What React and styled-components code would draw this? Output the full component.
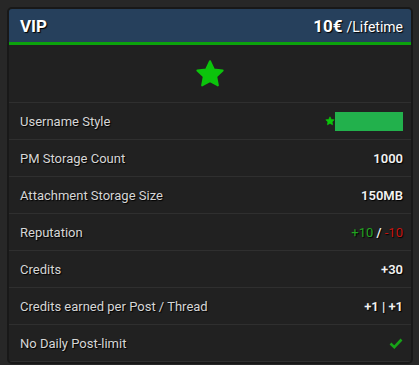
import React from "react";
import styled, { createGlobalStyle } from "styled-components";

const GlobalStyle = createGlobalStyle`
  html, body {
    margin: 0;
    padding: 0;
    background: #272727;
    font-family: Roboto, "Liberation Sans", sans-serif;
  }
`;

const Page = styled.div`
  padding: 7px;
`;

const Card = styled.div`
  width: 402px;
  border: 2px solid #181818;
  border-radius: 5px;
  background: #212121;
  overflow: hidden;
`;

const Header = styled.div`
  display: flex;
  align-items: center;
  justify-content: space-between;
  height: 33px;
  padding: 0 8px 0 11px;
  background: #26405c;
  border-bottom: 3px solid #0ca20c;
  color: #fff;
  text-shadow: 1px 1px 1px #000;
`;

const Title = styled.span`
  font-size: 17px;
  font-weight: 700;
`;

const Price = styled.span`
  font-size: 17px;
  font-weight: 700;

  small {
    font-size: 14px;
    font-weight: 400;
    margin-left: 4px;
  }
`;

const StarArea = styled.div`
  display: flex;
  align-items: center;
  justify-content: center;
  height: 57px;
  border-bottom: 1px solid #2f2f2f;
`;

const Row = styled.div`
  display: flex;
  align-items: center;
  justify-content: space-between;
  height: 36px;
  padding: 0 8px 0 11px;
  border-bottom: 1px solid #2f2f2f;
  font-size: 13px;
  text-shadow: 1px 1px 1px #000;
`;

const Label = styled.span`
  color: #d6d6d6;
`;

const Value = styled.span`
  display: flex;
  align-items: center;
  color: #f2f2f2;
  font-weight: 600;
`;

const Rep = styled.span`
  font-weight: 400;
  color: ${(p) => p.$color};
`;

const NameBox = styled.span`
  display: inline-block;
  width: 68px;
  height: 19px;
  background: #22b14c;
`;

const Star = ({ size }) => (
  <svg width={size} height={size} viewBox="0 0 24 24">
    <path
      d="M12 1.8l3.1 6.5 7 .9-5.1 4.9 1.3 7-6.3-3.4-6.3 3.4 1.3-7L1.9 9.2l7-.9z"
      fill="#0cc40c"
      stroke="#0cc40c"
      strokeWidth="1.6"
      strokeLinejoin="round"
    />
  </svg>
);

const Check = () => (
  <svg width="14" height="11" viewBox="0 0 14 11">
    <path d="M1.5 5.5l3.8 3.6L12.5 1.5" fill="none" stroke="#17a317" strokeWidth="2.6" />
  </svg>
);

const rows = [
  {
    label: "Username Style",
    value: (
      <>
        <Star size={10} />
        <NameBox />
      </>
    ),
  },
  { label: "PM Storage Count", value: "1000" },
  { label: "Attachment Storage Size", value: "150MB" },
  {
    label: "Reputation",
    value: (
      <>
        <Rep $color="#22a322">+10</Rep>&nbsp;/&nbsp;<Rep $color="#c8140f">-10</Rep>
      </>
    ),
  },
  { label: "Credits", value: "+30" },
  { label: "Credits earned per Post / Thread", value: "+1 | +1" },
  { label: "No Daily Post-limit", value: <Check /> },
];

export default function App() {
  return (
    <Page>
      <GlobalStyle />
      <Card>
        <Header>
          <Title>VIP</Title>
          <Price>
            10€<small>/Lifetime</small>
          </Price>
        </Header>
        <StarArea>
          <Star size={30} />
        </StarArea>
        {rows.map((r) => (
          <Row key={r.label}>
            <Label>{r.label}</Label>
            <Value>{r.value}</Value>
          </Row>
        ))}
      </Card>
    </Page>
  );
}
